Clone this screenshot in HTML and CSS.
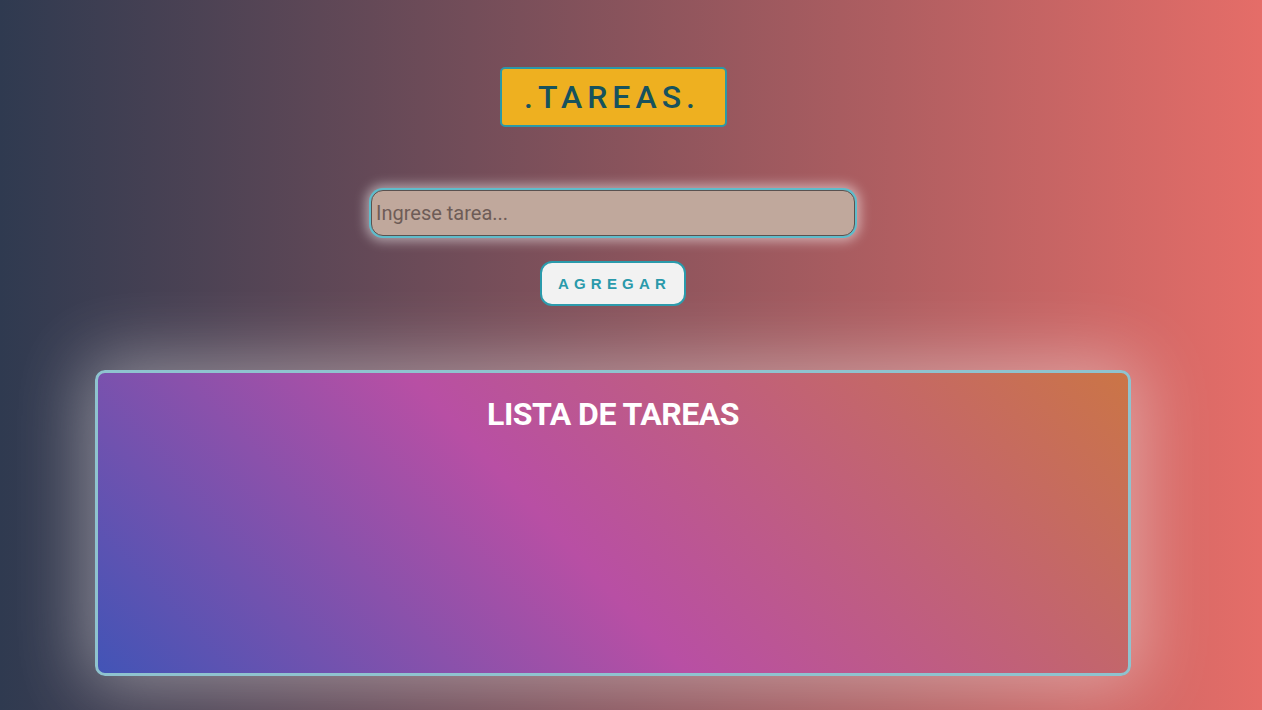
FILE: index.html
```html
<!DOCTYPE html>
<html lang="es">
<head>
<meta charset="utf-8">
<title>Tareas</title>
<link rel="stylesheet" href="styles.css">
</head>
<body>
  <div class="page">
    <h1 class="brand">.TAREAS.</h1>
    <input class="task-input" type="text" placeholder="Ingrese tarea...">
    <button class="add-btn" type="button">AGREGAR</button>
    <section class="list-card">
      <h2 class="list-title">LISTA DE TAREAS</h2>
    </section>
  </div>
</body>
</html>
```

FILE: styles.css
```css
html, body {
  margin: 0;
  padding: 0;
}
body {
  min-height: 710px;
  background: linear-gradient(to right, #2f3a50 0%, #e56d68 100%);
  font-family: Roboto, "Liberation Sans", Arial, sans-serif;
  overflow: hidden;
}
.page {
  width: 1226px;
  display: flex;
  flex-direction: column;
  align-items: center;
  padding-top: 67px;
}
.brand {
  margin: 0;
  box-sizing: border-box;
  height: 60px;
  width: 227px;
  padding: 0 2px 0 0;
  display: flex;
  align-items: center;
  justify-content: center;
  background: #eeb020;
  border: 2px solid #2a98a8;
  border-radius: 5px;
  color: #17525d;
  font-family: Roboto, "Liberation Sans", sans-serif;
  font-weight: 500;
  font-size: 32px;
  letter-spacing: 5px;
}
.task-input {
  margin-top: 63px;
  box-sizing: border-box;
  width: 484px;
  height: 46px;
  padding: 0 4px;
  background: #c0a89c;
  border: 1px solid #5a5250;
  border-radius: 12px;
  box-shadow: 0 0 0 2px #5fbccb, 0 0 12px 5px rgba(255, 255, 255, 0.5);
  outline: none;
  font-family: Roboto, "Liberation Sans", sans-serif;
  font-size: 20px;
  color: #5a4a46;
}
.task-input::placeholder {
  color: #6e5c57;
}
.add-btn {
  margin-top: 25px;
  box-sizing: border-box;
  width: 146px;
  height: 45px;
  background: #f2f2f2;
  border: 2px solid #2a9aab;
  border-radius: 12px;
  color: #2a9aab;
  font-family: "Liberation Sans", Arial, sans-serif;
  font-weight: 700;
  font-size: 15px;
  letter-spacing: 5.2px;
  padding: 0 0 0 3px;
}
.list-card {
  margin-top: 64px;
  box-sizing: border-box;
  width: 1036px;
  height: 306px;
  border: 3px solid #8fc3cf;
  border-radius: 10px;
  background: linear-gradient(47deg, #4254b6 0%, #b84fa4 45%, #cb7546 100%);
  box-shadow: 0 0 70px 10px rgba(255, 255, 255, 0.4);
  display: flex;
  flex-direction: column;
  align-items: center;
}
.list-title {
  margin: 22px 0 0 0;
  color: #ffffff;
  font-family: Roboto, "Liberation Sans", sans-serif;
  font-weight: 700;
  font-size: 32px;
  letter-spacing: -0.5px;
}
```
